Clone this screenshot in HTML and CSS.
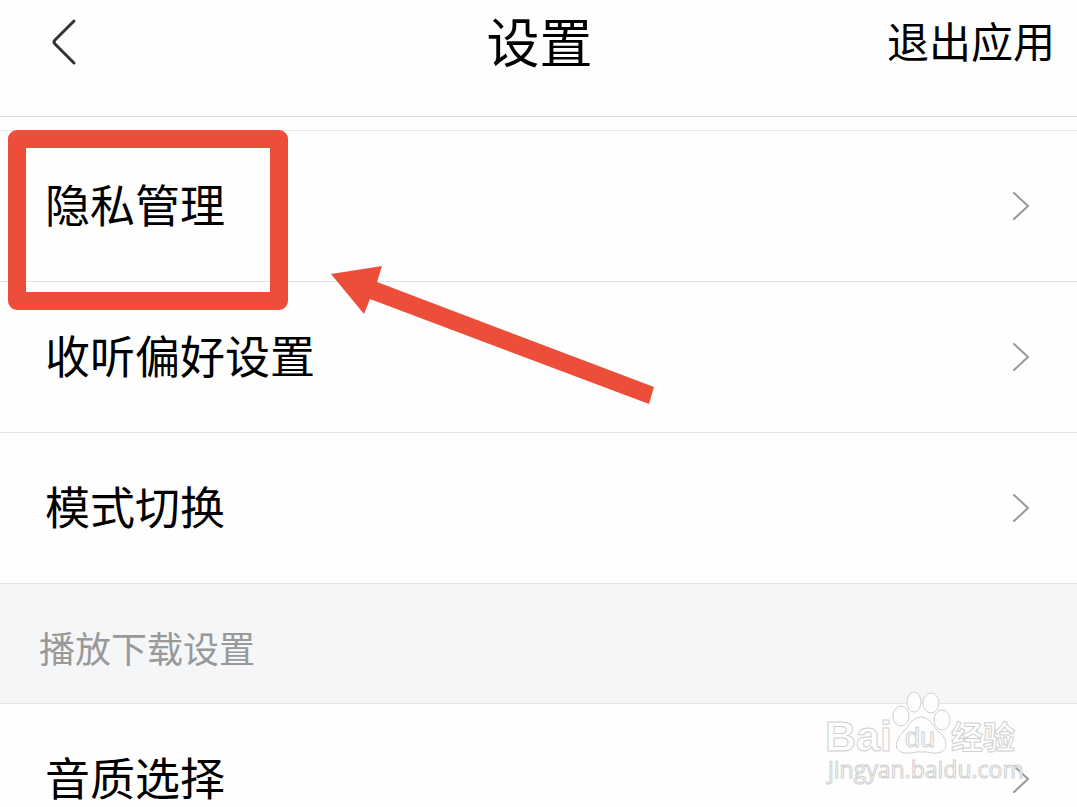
FILE: index.html
```html
<!DOCTYPE html>
<html lang="zh-CN">
<head>
<meta charset="utf-8">
<meta name="viewport" content="width=device-width, initial-scale=1">
<title>设置</title>
<link rel="stylesheet" href="styles.css">
</head>
<body>
<div class="screen">
  <header class="topbar">
    <button class="back" type="button" aria-label="返回">
      <svg width="30" height="50" viewBox="0 0 30 50" fill="none" stroke="#333" stroke-width="3" stroke-linecap="round" stroke-linejoin="round"><path d="M24 4 5 23Q3 25 5 27L24 46"/></svg>
    </button>
    <h1 class="title">设置</h1>
    <button class="exit" type="button">退出应用</button>
  </header>
  <main>
    <nav class="group">
      <a class="row" href="#privacy"><span class="label">隐私管理</span><svg class="chevron" viewBox="0 0 20 30"><path d="M3 2 17 15 3 28"/></svg></a>
      <a class="row" href="#listening"><span class="label">收听偏好设置</span><svg class="chevron" viewBox="0 0 20 30"><path d="M3 2 17 15 3 28"/></svg></a>
      <a class="row" href="#mode"><span class="label">模式切换</span><svg class="chevron" viewBox="0 0 20 30"><path d="M3 2 17 15 3 28"/></svg></a>
    </nav>
    <h2 class="section">播放下载设置</h2>
    <nav>
      <a class="row" href="#quality"><span class="label">音质选择</span><svg class="chevron" viewBox="0 0 20 30"><path d="M3 2 17 15 3 28"/></svg></a>
    </nav>
  </main>
  <div class="highlight"></div>
  <svg class="arrow" width="324" height="140" viewBox="0 0 324 140" aria-hidden="true"><path fill="#ed4e3a" d="M0 9 51 1 46 17 323 122 318 139 39 34 33 49Z"/></svg>
  <svg class="watermark" width="210" height="100" viewBox="0 0 210 100" aria-hidden="true">
    <g class="mark">
      <text class="latin" x="2" y="60" font-size="43">Bai</text>
      <ellipse cx="78" cy="25" rx="8" ry="10"/>
      <ellipse cx="91" cy="11" rx="7" ry="10"/>
      <ellipse cx="108" cy="12" rx="8" ry="10"/>
      <ellipse cx="119" cy="29" rx="8" ry="10"/>
      <path d="M98 26C89 26 86 35 80 41C74 47 70 58 78 61C86 64 92 60 98 61C104 60 111 64 118 61C126 58 123 46 116 41C110 36 107 26 98 26Z"/>
      <text class="latin du" x="82" y="56" font-size="27">du</text>
      <text class="cjk" x="128" y="58" font-size="32">经验</text>
    </g>
    <text class="mark url" x="5" y="87" font-size="23">jingyan.baidu.com</text>
  </svg>
</div>
</body>
</html>
```
FILE: styles.css
```css
* { box-sizing: border-box; }

body {
  margin: 0;
  background: #fefefe;
  color: #000;
  font-family: "Noto Sans CJK SC", sans-serif;
}

.screen {
  position: relative;
  height: 100vh;
  overflow: hidden;
}

.topbar {
  display: grid;
  grid-template-columns: 1fr auto 1fr;
  align-items: center;
  padding: 0 22px 32px 50px;
  border-bottom: 1px solid #d9d9d9;
}

button {
  padding: 0;
  border: 0;
  background: none;
  color: inherit;
  font: inherit;
}

.back {
  display: flex;
  justify-self: start;
}

.title {
  margin: 0 26px 4px 0;
  font-size: 53px;
  font-weight: 400;
  line-height: 80px;
}

.exit {
  justify-self: end;
  padding-bottom: 4px;
  font-size: 42px;
  line-height: 80px;
}

.group {
  margin-top: 13px;
  border-top: 1px solid #e6e6e6;
}

.row {
  display: flex;
  align-items: center;
  justify-content: space-between;
  min-height: 151px;
  padding: 0 46px 0 45px;
  border-bottom: 1px solid #e3e3e3;
  color: inherit;
  font-size: 45px;
  line-height: 64px;
  text-decoration: none;
}

.label { padding-bottom: 4px; }

.chevron {
  width: 20px;
  height: 30px;
  fill: none;
  stroke: #999;
  stroke-width: 2;
  stroke-linecap: round;
  stroke-linejoin: round;
}

.section {
  margin: 0;
  padding: 36px 39px 29px;
  border-bottom: 1px solid #e3e5e7;
  background: #f5f6f8;
  color: #999;
  font-size: 36px;
  font-weight: 400;
  line-height: 54px;
}

.highlight {
  position: absolute;
  top: 130px;
  left: 8px;
  width: 280px;
  height: 180px;
  border: 18px solid #ed4e3a;
  border-radius: 9px;
  pointer-events: none;
}

.arrow {
  position: absolute;
  top: 265px;
  left: 331px;
  pointer-events: none;
}

.watermark {
  position: absolute;
  right: 44px;
  bottom: 16px;
  overflow: visible;
  pointer-events: none;
}

.mark {
  fill: #fefefe;
  stroke: #d0d0d0;
  stroke-width: 1;
}

.latin {
  font-family: "Liberation Sans", Arial, sans-serif;
  font-weight: 700;
}

.du { font-weight: 400; }

.cjk { font-weight: 700; }

.url { font-family: "Open Sans", sans-serif; }
```
